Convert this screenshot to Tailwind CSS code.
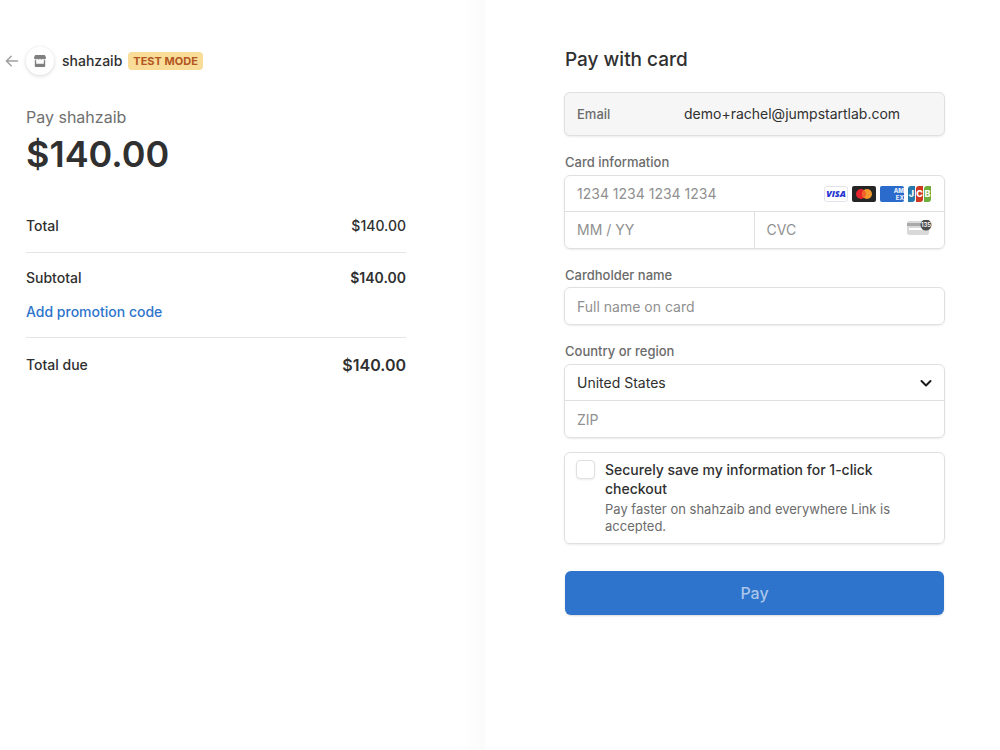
<!DOCTYPE html>
<html lang="en">
<head>
  <meta charset="UTF-8">
  <meta name="viewport" content="width=device-width, initial-scale=1.0">
  <title>shahzaib - Checkout</title>
  <script src="https://cdn.jsdelivr.net/npm/@tailwindcss/browser@4"></script>
</head>
<body class="flex min-h-screen bg-white font-['Inter',sans-serif] text-sm text-[#303030] antialiased">

  <!-- Order summary -->
  <section class="w-[48.5%] bg-linear-to-r from-white from-95% to-[#fbfbfb] pt-[47px] pr-[79px] pl-[5px]">
    <header class="flex items-center">
      <a href="#" aria-label="Back" class="mr-[7px] text-[#a0a0a0]">
        <svg class="size-[14px]" viewBox="0 0 14 14" fill="none" stroke="currentColor" stroke-width="1.5" stroke-linecap="round" stroke-linejoin="round">
          <path d="M12.5 7H1.5M6.2 2.2L1.4 7l4.8 4.8"/>
        </svg>
      </a>
      <div class="flex size-7 items-center justify-center rounded-full bg-white shadow-[0_1px_4px_rgba(0,0,0,0.16)]">
        <svg class="h-3 w-3" viewBox="0 0 12 12" fill="#7f7f7f">
          <path d="M1.2 0h9.6L12 2.600c0 1.200-.8 1.900-1.600 1.900-.6 0-1.100-.3-1.400-.7-.4.4-.9.7-1.500.7S6.400 4.200 6 3.800c-.4.4-.9.7-1.500.7S3.400 4.200 3 3.800c-.3.4-.8.7-1.400.7C.8 4.500 0 3.800 0 2.600z"/>
          <path d="M.8 5.200c.5.100 1 .1 1.400-.1v3.600h7.600V5.100c.4.200.9.200 1.400.1V11c0 .6-.4 1-1 1H1.800c-.6 0-1-.4-1-1z"/>
        </svg>
      </div>
      <span class="ml-2 font-medium">shahzaib</span>
      <span class="ml-[6px] rounded bg-[#f8dc97] px-[5px] text-[11px] leading-[18px] font-bold text-[#b3561f]">TEST MODE</span>
    </header>

    <div class="pl-[21px]">
      <p class="mt-8 text-base leading-5 text-[#707070]">Pay shahzaib</p>
      <p class="mt-[7px] text-4xl leading-10 font-semibold">$140.00</p>

      <dl class="mt-[42px] font-medium">
        <div class="flex justify-between border-b border-[#e4e4e4] pb-4 leading-5">
          <dt>Total</dt>
          <dd>$140.00</dd>
        </div>
        <div class="mt-[15px] flex justify-between leading-5">
          <dt>Subtotal</dt>
          <dd class="font-semibold">$140.00</dd>
        </div>
        <div class="border-b border-[#e4e4e4] pt-[14px] pb-[15px] leading-5">
          <dt><button type="button" class="text-[#2e74cc]">Add promotion code</button></dt>
        </div>
        <div class="mt-[17px] flex items-center justify-between leading-5">
          <dt>Total due</dt>
          <dd class="text-base leading-5 font-semibold">$140.00</dd>
        </div>
      </dl>
    </div>
  </section>

  <!-- Payment form -->
  <form class="flex-1 pt-12 pr-[55px] pb-10 pl-[79px]">
    <h1 class="pl-px text-[19px] leading-6 font-medium">Pay with card</h1>

    <div class="mt-5 flex h-11 items-center rounded-md border border-[#e0e0e0] bg-[#f6f6f6] px-3 shadow-[0_1px_2px_rgba(0,0,0,0.08)]">
      <label for="email" class="w-[107px] text-[13px] font-medium text-[#6b6b6b]">Email</label>
      <input id="email" type="email" readonly value="demo+rachel@jumpstartlab.com" class="min-w-0 flex-1 outline-none">
    </div>

    <label for="cardNumber" class="mt-[18px] mb-[5px] block pl-px text-[13px] leading-4 font-medium text-[#6b6b6b]">Card information</label>
    <div class="rounded-md border border-[#e0e0e0] shadow-[0_1px_2px_rgba(0,0,0,0.08)]">
      <div class="flex h-9 items-center border-b border-[#e0e0e0] px-3">
        <input id="cardNumber" type="text" placeholder="1234 1234 1234 1234" class="min-w-0 flex-1 outline-none placeholder:text-[#909090]">
        <div class="flex gap-1">
          <svg class="h-4 w-6" viewBox="0 0 24 16" role="img" aria-label="Visa">
            <rect x=".5" y=".5" width="23" height="15" rx="2" fill="#fff" stroke="#e3e3ea"/>
            <text x="12" y="11" text-anchor="middle" font-family="Open Sans" font-size="9" font-weight="800" font-style="italic" fill="#2334d0">VISA</text>
          </svg>
          <svg class="h-4 w-6" viewBox="0 0 24 16" role="img" aria-label="Mastercard">
            <rect width="24" height="16" rx="2" fill="#252525"/>
            <circle cx="9" cy="8" r="5" fill="#e5232a"/>
            <circle cx="15" cy="8" r="5" fill="#f1982f"/>
            <path d="M12 4a5 5 0 0 1 0 8 5 5 0 0 1 0-8z" fill="#f0602a"/>
          </svg>
          <svg class="h-4 w-6" viewBox="0 0 24 16" role="img" aria-label="American Express">
            <rect width="24" height="16" rx="2" fill="#2a6bcb"/>
            <g font-family="Inter" font-size="6" font-weight="800" fill="#e6effb">
              <text x="24" y="7" text-anchor="end">AM</text>
              <text x="24" y="14" text-anchor="end">EX</text>
            </g>
          </svg>
          <svg class="h-4 w-6" viewBox="0 0 24 16" role="img" aria-label="JCB">
            <path d="M3 0h4v13a3 3 0 0 1-3 3H0V3a3 3 0 0 1 3-3z" fill="#2778ad"/>
            <path d="M11 0h4v13a3 3 0 0 1-3 3H8V3a3 3 0 0 1 3-3z" fill="#d0371f"/>
            <path d="M19 0h4v13a3 3 0 0 1-3 3h-4V3a3 3 0 0 1 3-3z" fill="#6fae3c"/>
            <g font-family="Inter" font-size="9" font-weight="800" fill="#fff" text-anchor="middle">
              <text x="3.500" y="11">J</text>
              <text x="11.500" y="11">C</text>
              <text x="19.500" y="11">B</text>
            </g>
          </svg>
        </div>
      </div>
      <div class="flex h-9">
        <input type="text" aria-label="Expiration" placeholder="MM / YY" class="w-1/2 min-w-0 border-r border-[#e0e0e0] px-3 outline-none placeholder:text-[#909090]">
        <div class="flex w-1/2 items-center px-3">
          <input type="text" aria-label="CVC" placeholder="CVC" class="min-w-0 flex-1 outline-none placeholder:text-[#909090]">
          <svg class="h-5 w-[25px]" viewBox="0 0 25 20">
            <rect y="1" width="22" height="14" rx="2" fill="#d9d9d9"/>
            <path d="M0 3h22v3H0z" fill="#a9a9a9"/>
            <path d="M2 8h13v2H2z" fill="#fff"/>
            <circle cx="19" cy="5" r="5.500" fill="#4c4c4c"/>
            <text x="19" y="7" text-anchor="middle" font-family="Inter" font-size="6" font-weight="600" fill="#fff">135</text>
          </svg>
        </div>
      </div>
    </div>

    <label for="cardName" class="mt-[18px] mb-1 block pl-px text-[13px] leading-4 font-medium text-[#6b6b6b]">Cardholder name</label>
    <input id="cardName" type="text" placeholder="Full name on card" class="block h-[38px] w-full rounded-md border border-[#e0e0e0] px-3 shadow-[0_1px_2px_rgba(0,0,0,0.08)] outline-none placeholder:text-[#909090]">

    <label for="country" class="mt-[18px] mb-[5px] block pl-px text-[13px] leading-4 font-medium text-[#6b6b6b]">Country or region</label>
    <div class="rounded-md border border-[#e0e0e0] shadow-[0_1px_2px_rgba(0,0,0,0.08)]">
      <div class="relative border-b border-[#e0e0e0]">
        <select id="country" class="block h-[35px] w-full appearance-none px-3 outline-none">
          <option>United States</option>
          <option>Canada</option>
          <option>United Kingdom</option>
        </select>
        <svg class="pointer-events-none absolute top-3 right-3 size-3" viewBox="0 0 12 12" fill="none" stroke="#1a1a1a" stroke-width="2" stroke-linecap="round" stroke-linejoin="round">
          <path d="M1.500 4L6 8.500 10.500 4"/>
        </svg>
      </div>
      <input type="text" aria-label="ZIP" placeholder="ZIP" class="block h-9 w-full px-3 outline-none placeholder:text-[#909090]">
    </div>

    <div class="mt-[14px] flex gap-[10px] rounded-md border border-[#e0e0e0] px-[11px] pt-[7px] pb-2 shadow-[0_1px_2px_rgba(0,0,0,0.08)]">
      <input id="saveInfo" type="checkbox" class="size-[19px] shrink-0 appearance-none rounded border border-[#e0e0e0] bg-white shadow-[0_1px_2px_rgba(0,0,0,0.08)] checked:bg-[#2e74cc]">
      <div>
        <label for="saveInfo" class="block max-w-[300px] leading-[19px] font-medium">Securely save my information for 1-click checkout</label>
        <p class="mt-[3px] max-w-[300px] text-[13px] leading-[17px] text-[#6b6b6b]">Pay faster on shahzaib and everywhere Link is accepted.</p>
      </div>
    </div>

    <div class="mt-[27px] px-px">
      <button type="submit" class="h-11 w-full rounded-md bg-[#2e74cc] text-base font-medium text-[#a9c6ea] shadow-[0_1px_2px_rgba(0,0,0,0.15)]">Pay</button>
    </div>
  </form>

</body>
</html>
